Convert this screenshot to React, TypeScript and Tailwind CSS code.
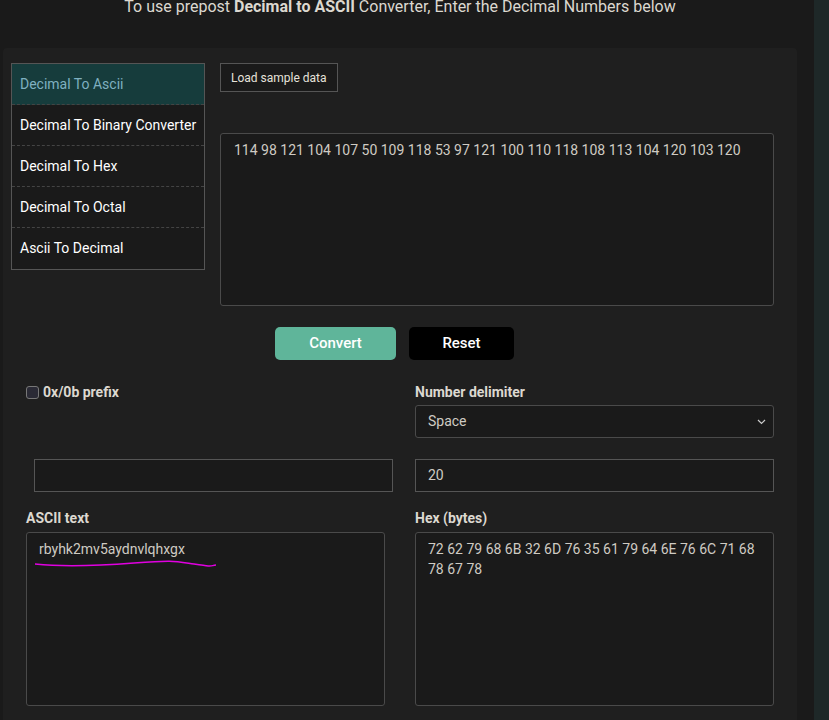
import React from "react";

const font = { fontFamily: "Roboto, 'Liberation Sans', sans-serif" };

export default function App() {
  const items = ["Decimal To Binary Converter", "Decimal To Hex", "Decimal To Octal", "Ascii To Decimal"];
  return (
    <div style={font} className="flex w-[829px] h-[720px] overflow-hidden bg-[#1a1a1a] text-[#dcd8d0]">
      <div className="w-[814px] shrink-0 flex flex-col">
        <div className="h-[48px] relative">
          <p className="absolute top-[-5px] left-0 w-[800px] text-center text-[16px]">
            To use prepost <b>Decimal to ASCII</b> Converter, Enter the Decimal Numbers below
          </p>
        </div>
        <div className="ml-[3px] w-[794px] flex-1 bg-[#1f1f1f] rounded-t-[4px] pl-[8px] pt-[15px]">
          <div className="flex gap-[15px]">
            <div className="w-[194px] self-start border border-[#555] bg-[#1a1a1a] flex flex-col text-[14px]">
              <div className="h-[41px] shrink-0 flex items-center pl-[8px] bg-[#163c3c] text-[#7fb0c0] border-b border-dashed border-[#444]">Decimal To Ascii</div>
              {items.map((t, i) => (
                <div key={t} className={`h-[41px] shrink-0 flex items-center pl-[8px] text-white ${i < 3 ? "border-b border-dashed border-[#444]" : ""}`}>{t}</div>
              ))}
            </div>
            <div className="w-[554px] flex flex-col">
              <button className="self-start h-[29px] px-[10px] border border-[#555] bg-[#1a1a1a] text-[12px] text-[#e6e2da]">Load sample data</button>
              <div className="mt-[41px] h-[173px] border border-[#4a4a4a] rounded-[3px] bg-[#1a1a1a] px-[13px] py-[6px] text-[14px] text-[#cfcbc3]">
                114 98 121 104 107 50 109 118 53 97 121 100 110 118 108 113 104 120 103 120
              </div>
            </div>
          </div>
          <div className="flex gap-[13px] mt-[21px] ml-[264px]">
            <button className="w-[121px] h-[33px] rounded-[5px] bg-[#5fb59a] text-white text-[15px] font-medium">Convert</button>
            <button className="w-[105px] h-[33px] rounded-[5px] bg-black text-white text-[15px] font-medium">Reset</button>
          </div>
          <div className="flex gap-[30px] ml-[15px] mt-[21px]">
            <div className="w-[359px] flex flex-col">
              <label className="flex items-center gap-[4px] h-[22px] text-[14px] font-bold text-[#dcd8d0]">
                <span className="w-[13px] h-[13px] rounded-[3px] border border-[#777] bg-[#2a2a35]" />
                0x/0b prefix
              </label>
              <div className="ml-[8px] mt-[56px] w-[359px] h-[33px] border border-[#555] bg-[#1a1a1a]" />
              <div className="mt-[16px] text-[14px] font-bold h-[20px]">ASCII text</div>
              <div className="relative mt-[4px] h-[174px] border border-[#4a4a4a] rounded-[3px] bg-[#1a1a1a] px-[12px] py-[6px] text-[14px] text-[#cfcbc3]">
                rbyhk2mv5aydnvlqhxgx
                <svg className="absolute left-[7px] top-[26px]" width="185" height="10" viewBox="0 0 185 10">
                  <path d="M1 5 C 30 8, 60 7, 100 4 S 140 2, 160 5 S 175 7, 182 6" stroke="#e000e0" strokeWidth="1.5" fill="none" />
                </svg>
              </div>
            </div>
            <div className="w-[359px] flex flex-col">
              <div className="h-[22px] text-[14px] font-bold leading-[22px]">Number delimiter</div>
              <div className="mt-[2px] h-[33px] border border-[#4a4a4a] rounded-[3px] bg-[#1a1a1a] flex items-center justify-between px-[12px] text-[14px] text-[#cfcbc3]">
                Space
                <svg width="9" height="6" viewBox="0 0 9 6" className="-mr-[5px]"><path d="M1 1l3.5 3.5L8 1" stroke="#ccc" strokeWidth="1.2" fill="none" /></svg>
              </div>
              <div className="mt-[21px] h-[33px] border border-[#555] bg-[#1a1a1a] flex items-center px-[12px] text-[14px] text-[#cfcbc3]">20</div>
              <div className="mt-[16px] text-[14px] font-bold h-[20px]">Hex (bytes)</div>
              <div className="mt-[4px] h-[174px] border border-[#4a4a4a] rounded-[3px] bg-[#1a1a1a] px-[12px] py-[6px] text-[14px] leading-[20px] text-[#cfcbc3]">
                72 62 79 68 6B 32 6D 76 35 61 79 64 6E 76 6C 71 68 78 67 78
              </div>
            </div>
          </div>
        </div>
      </div>
      <div className="flex-1 bg-[#1e2828]" />
    </div>
  );
}
